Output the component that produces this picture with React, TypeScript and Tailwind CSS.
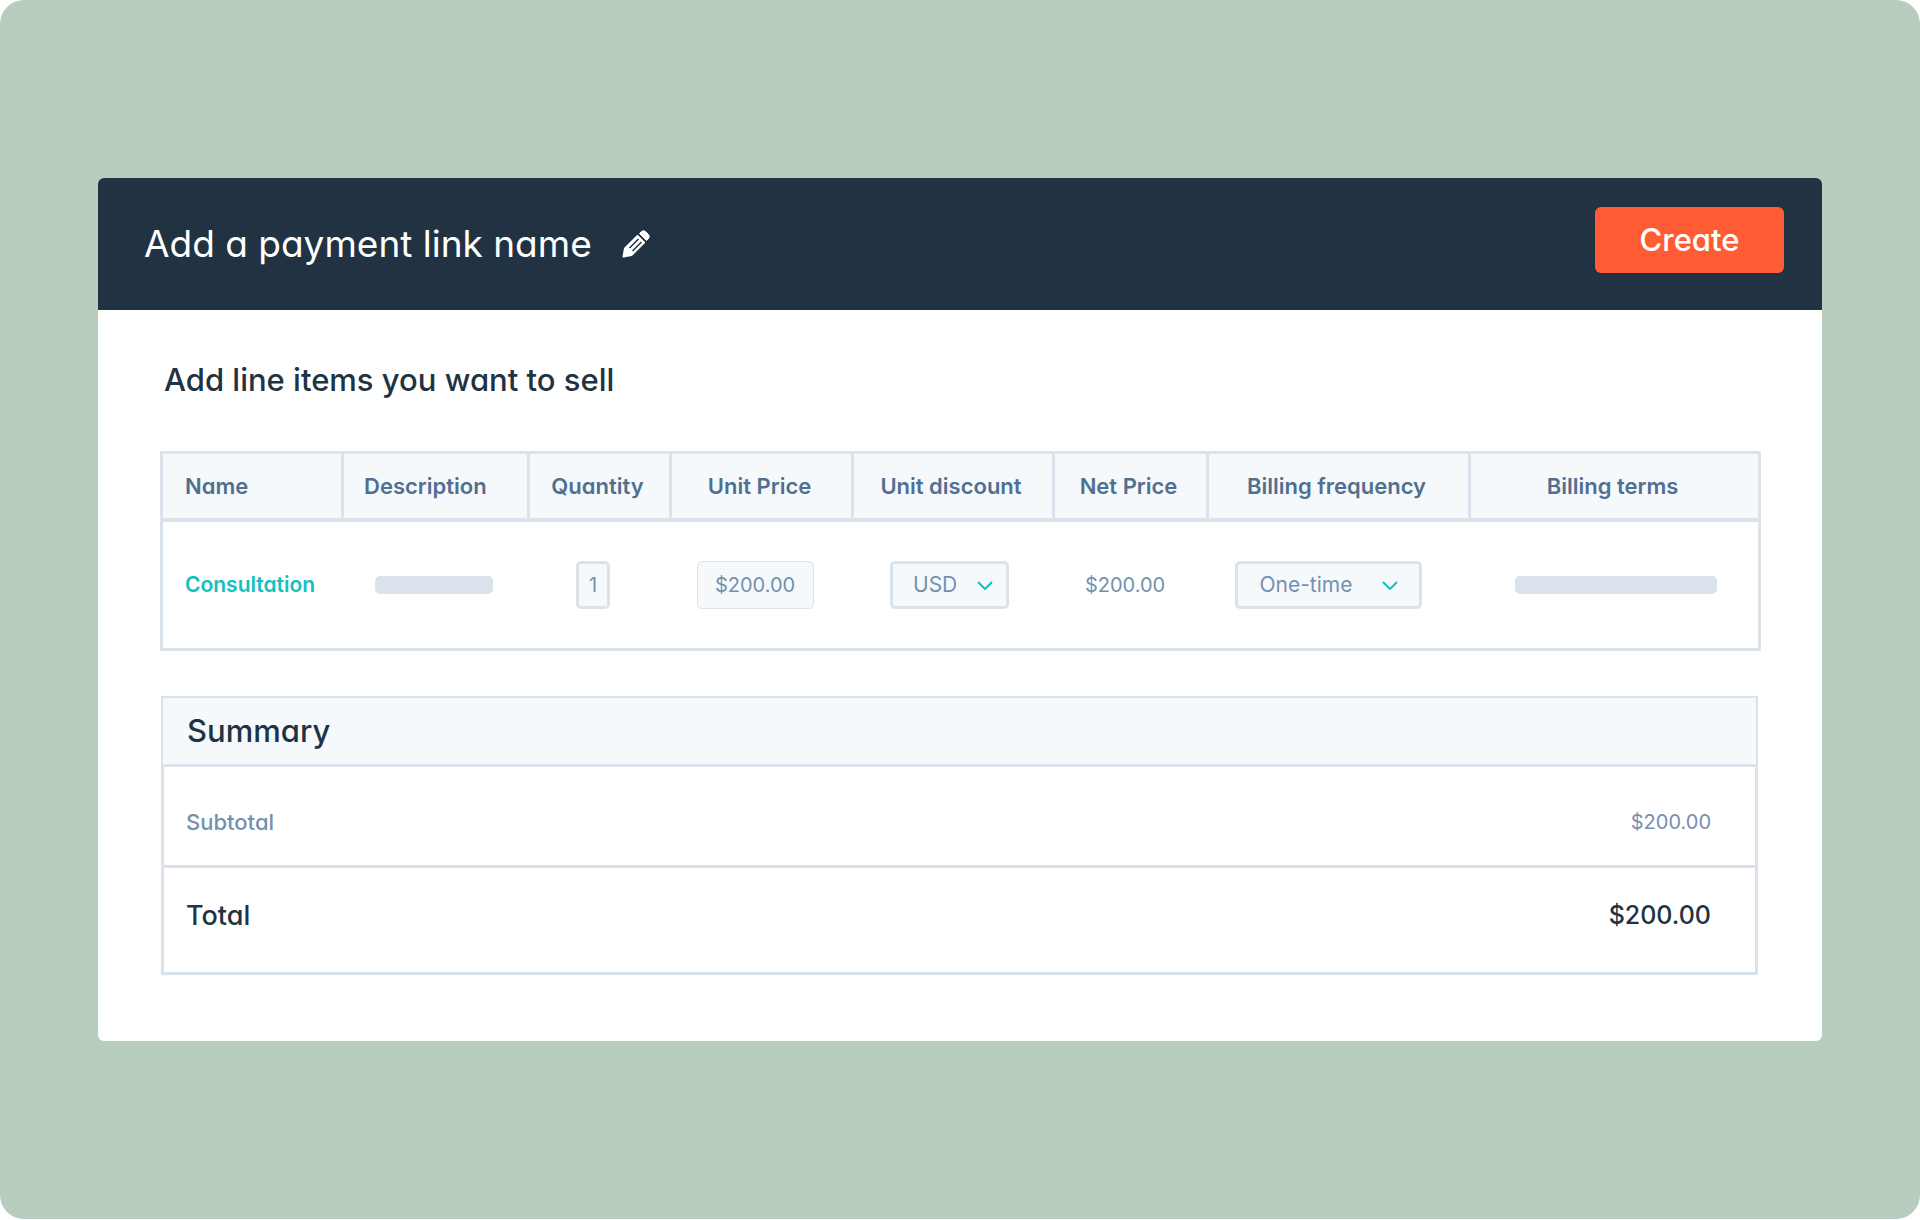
import { useState } from 'react';

const columns = [
  { label: 'Name', width: 178, align: 'pl-[22px] text-left' },
  { label: 'Description', width: 186, align: 'pl-5 text-left' },
  { label: 'Quantity', width: 142, align: 'pr-1 text-center' },
  { label: 'Unit Price', width: 182, align: 'pr-1 text-center' },
  { label: 'Unit discount', width: 201, align: 'pr-1 text-center' },
  { label: 'Net Price', width: 154, align: 'pr-1 text-center' },
  { label: 'Billing frequency', width: 262, align: 'pr-1 text-center' },
  { label: 'Billing terms', width: 290, align: 'pr-1 text-center' },
];

const totalWidth = columns.reduce((sum, c) => sum + c.width, 0);

function PencilIcon() {
  return (
    <svg viewBox="0 0 28 28" className="h-7 w-7" fill="currentColor" aria-hidden="true">
      <path d="M1.5 26.5 3 18.5 15.500 6 22 12.500 9.500 25Z" stroke="currentColor" strokeWidth="2" strokeLinejoin="round" />
      <path d="M17.500 3.500 19.500 1.500Q21.500 0 23.500 1.500L26.500 4.500Q28 6.500 26.500 8.500L24.500 10.500Z" stroke="currentColor" strokeLinejoin="round" />
      <path d="M7.500 18 16.500 9M10.500 21 19.500 12" stroke="#213343" strokeWidth="1.500" fill="none" />
    </svg>
  );
}

function Chevron() {
  return (
    <svg viewBox="0 0 16 9" className="h-[9px] w-4" fill="none" stroke="#14c0be" strokeWidth="2" aria-hidden="true">
      <path d="M1 1 8 8 15 1" />
    </svg>
  );
}

type SelectProps = {
  label: string;
  options: string[];
  className: string;
  chevronClass: string;
};

function Select({ label, options, className, chevronClass }: SelectProps) {
  const [value, setValue] = useState(options[0]);
  return (
    <div className="relative inline-flex items-center">
      <select
        aria-label={label}
        value={value}
        onChange={(e) => setValue(e.target.value)}
        className={`h-12 appearance-none rounded-[5px] border-[3px] border-[#dae3ec] bg-[#f5f9fc] text-[21px] ${className}`}
      >
        {options.map((o) => (
          <option key={o}>{o}</option>
        ))}
      </select>
      <span className={`pointer-events-none absolute ${chevronClass}`}>
        <Chevron />
      </span>
    </div>
  );
}

function LineItemsTable() {
  const [quantity, setQuantity] = useState('1');
  const [price, setPrice] = useState('$200.00');

  return (
    <div className="border-[3px] border-[#dae3ec]">
      <table className="w-full table-fixed border-separate border-spacing-0">
        <colgroup>
          {columns.map((c) => (
            <col key={c.label} style={{ width: `${(c.width / totalWidth) * 100}%` }} />
          ))}
        </colgroup>
        <thead>
          <tr className="h-[68px] bg-[#f5f9fc] text-[22px] leading-8 text-[#516f90]">
            {columns.map((c) => (
              <th
                key={c.label}
                scope="col"
                className={`border-b-4 border-l-[3px] border-[#dae3ec] font-semibold first:border-l-0 ${c.align}`}
              >
                {c.label}
              </th>
            ))}
          </tr>
        </thead>
        <tbody>
          <tr className="h-[126px] text-center text-xl text-[#7590ae]">
            <td className="pl-[22px] text-left">
              <a href="#consultation" className="text-[21px] font-semibold text-[#14c0be]">Consultation</a>
            </td>
            <td>
              <div className="mx-auto h-[18px] w-[118px] rounded-[5px] bg-[#dae3ec]" />
            </td>
            <td className="pr-2.5">
              <input
                aria-label="Quantity"
                value={quantity}
                onChange={(e) => setQuantity(e.target.value)}
                className="h-12 w-[34px] rounded-[5px] border-[3px] border-[#dae3ec] bg-[#f5f9fc] text-center"
              />
            </td>
            <td className="pr-2.5">
              <input
                aria-label="Unit price"
                value={price}
                onChange={(e) => setPrice(e.target.value)}
                className="h-12 w-[117px] rounded-[5px] border border-[#dae3ec] bg-[#f5f9fc] text-center"
              />
            </td>
            <td className="pr-1">
              <Select label="Discount currency" options={['USD', 'EUR', 'GBP']} className="w-[119px] pl-5" chevronClass="right-4" />
            </td>
            <td className="pr-2">$200.00</td>
            <td className="pr-[18px]">
              <Select label="Billing frequency" options={['One-time', 'Monthly', 'Annually']} className="w-[187px] pl-[22px]" chevronClass="right-6" />
            </td>
            <td className="pl-1.5">
              <div className="mx-auto h-[18px] w-[202px] rounded-[5px] bg-[#dae3ec]" />
            </td>
          </tr>
        </tbody>
      </table>
    </div>
  );
}

function Summary() {
  return (
    <section className="mr-[3px] ml-px">
      <h2 className="flex h-[68px] items-center border-2 border-b-0 border-[#dae3ec] bg-[#f5f9fc] pl-6 text-[31px] font-medium">
        Summary
      </h2>
      <dl className="border-[3px] border-[#dae3ec]">
        <div className="flex h-[101px] items-center justify-between border-b-[3px] border-[#dae3ec] pt-3 pr-11 pl-[22px] text-xl text-[#7590ae]">
          <dt className="text-[22px] font-medium">Subtotal</dt>
          <dd>$200.00</dd>
        </div>
        <div className="flex h-[104px] items-center justify-between pr-11 pb-2 pl-[22px]">
          <dt className="text-[27px] font-medium">Total</dt>
          <dd className="text-[25px] font-medium">$200.00</dd>
        </div>
      </dl>
    </section>
  );
}

export default function App() {
  return (
    <div className="bg-white font-['Inter','Liberation_Sans',sans-serif] text-[#213343] [font-feature-settings:'cv11']">
      <div className="flex min-h-[calc(100vh-1px)] flex-col justify-center rounded-3xl bg-[#b8cdbe] px-[98px] py-12">
        <main className="overflow-hidden rounded-md bg-white">
          <header className="flex items-center justify-between bg-[#213343] pt-[29px] pr-[38px] pb-[37px] pl-[46px] text-white">
            <div className="flex items-center gap-[30px] pt-2">
              <h1 className="text-[37px] leading-12">Add a payment link name</h1>
              <button type="button" aria-label="Edit name">
                <PencilIcon />
              </button>
            </div>
            <button type="button" className="h-[66px] w-[189px] rounded-md bg-[#ff5c35] text-[31px] font-medium">
              Create
            </button>
          </header>
          <div className="flex flex-col pt-[50px] pr-[61px] pb-[66px] pl-[62px]">
            <h2 className="mb-[51px] pl-1 text-[31px] leading-10 font-medium">Add line items you want to sell</h2>
            <LineItemsTable />
            <div className="h-[45px]" />
            <Summary />
          </div>
        </main>
      </div>
    </div>
  );
}
